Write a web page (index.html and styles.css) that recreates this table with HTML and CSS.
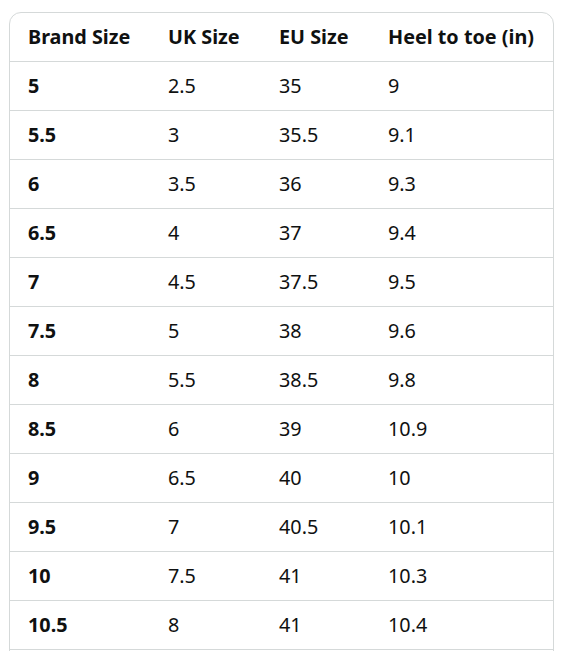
FILE: index.html
```html
<!DOCTYPE html>
<html lang="en">
<head>
    <meta charset="UTF-8">
    <meta name="viewport" content="width=device-width, initial-scale=1.0">
    <title>Size Chart</title>
    <link rel="stylesheet" href="styles.css">
</head>
<body>

<div class="chart-wrap">
    <table class="size-chart">
        <thead>
            <tr>
                <th class="col-brand">Brand Size</th>
                <th class="col-uk">UK Size</th>
                <th class="col-eu">EU Size</th>
                <th class="col-heel">Heel to toe (in)</th>
            </tr>
        </thead>
        <tbody>
            <tr><td>5</td><td>2.5</td><td>35</td><td>9</td></tr>
            <tr><td>5.5</td><td>3</td><td>35.5</td><td>9.1</td></tr>
            <tr><td>6</td><td>3.5</td><td>36</td><td>9.3</td></tr>
            <tr><td>6.5</td><td>4</td><td>37</td><td>9.4</td></tr>
            <tr><td>7</td><td>4.5</td><td>37.5</td><td>9.5</td></tr>
            <tr><td>7.5</td><td>5</td><td>38</td><td>9.6</td></tr>
            <tr><td>8</td><td>5.5</td><td>38.5</td><td>9.8</td></tr>
            <tr><td>8.5</td><td>6</td><td>39</td><td>10.9</td></tr>
            <tr><td>9</td><td>6.5</td><td>40</td><td>10</td></tr>
            <tr><td>9.5</td><td>7</td><td>40.5</td><td>10.1</td></tr>
            <tr><td>10</td><td>7.5</td><td>41</td><td>10.3</td></tr>
            <tr><td>10.5</td><td>8</td><td>41</td><td>10.4</td></tr>
        </tbody>
    </table>
</div>

</body>
</html>
```

FILE: styles.css
```css
body {
    margin: 0;
    padding: 12px 10px 0 9px;
    background: #fff;
    font-family: "Noto Sans", "Open Sans", sans-serif;
    color: #0f1111;
}
.chart-wrap {
    border: 1px solid #d5d9d9;
    border-radius: 12px;
    overflow: hidden;
    padding-bottom: 24px;
}
.size-chart {
    width: 100%;
    border-collapse: collapse;
    font-size: 19.8px;
    text-align: left;
}
.size-chart th,
.size-chart td {
    height: 49px;
    padding: 0 18px;
    border-bottom: 1px solid #d5d9d9;
    box-sizing: border-box;
    vertical-align: middle;
    line-height: 24px;
}
.size-chart th {
    height: 48px;
    font-weight: bold;
}
.size-chart td:first-child {
    font-weight: bold;
}
.col-brand { width: 140px; }
.col-uk { width: 111px; }
.col-eu { width: 109px; }
```
